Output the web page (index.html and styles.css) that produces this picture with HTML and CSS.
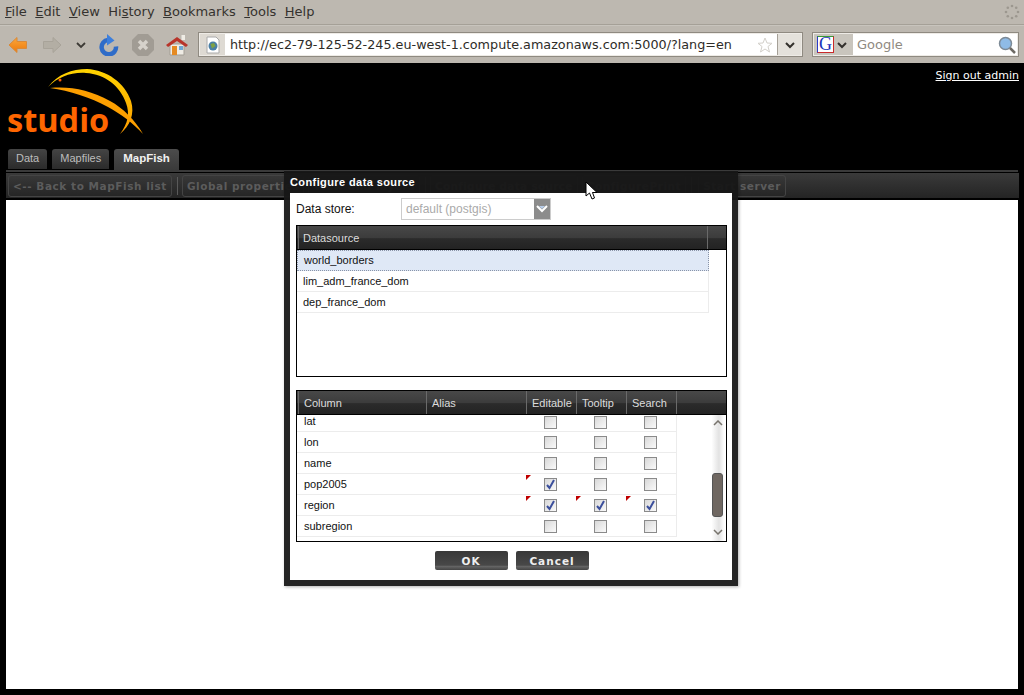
FILE: index.html
```html
<!DOCTYPE html>
<html lang="en">
<head>
    <meta charset="UTF-8">
    <title>Studio</title>
    <link rel="stylesheet" href="styles.css">
</head>
<body>
    <!-- browser chrome -->
    <div class="menubar">
        <span><u>F</u>ile</span>
        <span><u>E</u>dit</span>
        <span><u>V</u>iew</span>
        <span>Hi<u>s</u>tory</span>
        <span><u>B</u>ookmarks</span>
        <span><u>T</u>ools</span>
        <span><u>H</u>elp</span>
        <svg class="throbber" width="16" height="16" viewBox="0 0 16 16">
            <g fill="#9c978f">
                <circle cx="8" cy="2" r="1.3"/><circle cx="12.2" cy="3.8" r="1.3"/><circle cx="14" cy="8" r="1.3"/><circle cx="12.2" cy="12.2" r="1.3"/>
                <circle cx="8" cy="14" r="1.3"/><circle cx="3.8" cy="12.2" r="1.3"/><circle cx="2" cy="8" r="1.3"/><circle cx="3.8" cy="3.8" r="1.3"/>
            </g>
        </svg>
    </div>
    <div class="navbar">
        <svg class="nav-icon back" width="20" height="18" viewBox="0 0 20 18">
            <defs><linearGradient id="orange" x1="0" y1="0" x2="0" y2="1"><stop offset="0" stop-color="#fba63a"/><stop offset="1" stop-color="#ec7a0c"/></linearGradient></defs>
            <path d="M1 9 L9 1.500 V5.500 H18.500 V12.500 H9 V16.500 Z" fill="url(#orange)" stroke="#d98a3a"/>
        </svg>
        <svg class="nav-icon forward" width="20" height="18" viewBox="0 0 20 18"><path d="M19 9 L11 1.500 V5.500 H1.500 V12.500 H11 V16.500 Z" fill="#b3aea4" stroke="#a8a399"/></svg>
        <svg class="nav-icon drop" width="12" height="8" viewBox="0 0 12 8"><path d="M2 2 L6 6 L10 2" fill="none" stroke="#3d3a35" stroke-width="1.800"/></svg>
        <svg class="nav-icon reload" width="20" height="22" viewBox="0 0 20 22">
            <path d="M17 12.500 A7.200 7.200 0 1 1 9 6" fill="none" stroke="#2f6cc8" stroke-width="4.500"/>
            <path d="M8 0 L15.500 6.500 L8 11.500 Z" fill="#3d7fdc"/>
        </svg>
        <svg class="nav-icon stop" width="24" height="24" viewBox="0 0 24 24"><path d="M7 1 H17 L23 7 V17 L17 23 H7 L1 17 V7 Z" fill="#a19c94"/><path d="M8 8 L16 16 M16 8 L8 16" stroke="#d6d2cb" stroke-width="3.500"/></svg>
        <svg class="nav-icon home" width="22" height="22" viewBox="0 0 22 22"><path d="M4 10 H18 V21 H4 Z" fill="#efece5" stroke="#a39e95"/><path d="M0 11 L11 3 L22 11 L20 13 L11 7 L2 13 Z" fill="#b8342a"/><rect x="15.500" y="1" width="3.500" height="5" fill="#efece5"/><rect x="6" y="12" width="5" height="9" fill="#e58a22"/><rect x="13" y="12" width="4" height="4" fill="#6fa8d4"/></svg>
        <div class="urlbar">
            <span class="favicon"><svg width="16" height="18" viewBox="0 0 16 18"><path d="M2 1 H11 L14 4 V17 H2 Z" fill="#fff" stroke="#aaa"/><circle cx="8" cy="10" r="4.500" fill="#4a7fa5"/><path d="M5.500 8 L9 7 L10.500 10 L7 12.500 Z" fill="#7fa243"/></svg></span>
            <span class="url">http://ec2-79-125-52-245.eu-west-1.compute.amazonaws.com:5000/?lang=en</span>
            <svg class="star" width="16" height="16" viewBox="0 0 16 16"><path d="M8 1 L10 6 L15 6.300 L11 9.500 L12.500 15 L8 12 L3.500 15 L5 9.500 L1 6.300 L6 6 Z" fill="#fff" stroke="#d3d0ca"/></svg>
            <span class="url-drop"><svg width="12" height="8" viewBox="0 0 12 8"><path d="M2 2 L6 6 L10 2" fill="none" stroke="#33302c" stroke-width="2"/></svg></span>
        </div>
        <div class="searchbar">
            <span class="engine">
                <span class="engine-logo">G</span>
                <svg width="12" height="8" viewBox="0 0 12 8"><path d="M2 2 L6 6 L10 2" fill="none" stroke="#33302c" stroke-width="2"/></svg>
            </span>
            <span class="search-hint">Google</span>
            <svg class="lens" width="18" height="18" viewBox="0 0 18 18"><circle cx="7.500" cy="7.500" r="6" fill="#8fbbe6" stroke="#7d8a96" stroke-width="1.500"/><path d="M12 12 L17 17" stroke="#6d6a64" stroke-width="2.500"/></svg>
        </div>
    </div>

    <!-- page -->
    <div class="page">
        <div class="header">
            <div class="logo">
                <svg class="logo-mark" width="100" height="68" viewBox="0 0 100 68">
                    <defs><linearGradient id="arc" x1="0" y1="0" x2="0" y2="1"><stop offset="0" stop-color="#ffd400"/><stop offset="1" stop-color="#fd9a00"/></linearGradient></defs>
                    <path d="M3 19 C13 6 27 1 42 1 C62 2 80 15 86 33 C90 46 85 58 75 66 C83 55 85 46 81 35 C75 18 60 6 41 5 C26 4 13 9 3 19 Z" fill="url(#arc)"/>
                    <path d="M5 20 C25 18 45 22 65 33 C78 40 90 52 98 66 C88 55 76 46 63 39 C45 29 25 23 5 20 Z" fill="#fd9f00"/>
                    <circle cx="15" cy="12" r="1.500" fill="#ff5a00"/>
                </svg>
                <span class="logo-text">studio</span>
            </div>
            <a class="signout">Sign out admin</a>
        </div>
        <div class="tabs">
            <span class="tab">Data</span>
            <span class="tab">Mapfiles</span>
            <span class="tab active">MapFish</span>
        </div>
        <div class="toolbar">
            <span class="tbtn">&lt;-- Back to MapFish list</span>
            <i class="sep"></i>
            <span class="tbtn">Global properties</span>
            <span class="tbtn">View and layers</span>
            <i class="sep"></i>
            <span class="tbtn narrow">Configure data source</span>
            <span class="tbtn">ConfigurePrint</span>
            <i class="sep"></i>
            <span class="tbtn start">Start server</span>
        </div>
        <div class="content"></div>
    </div>

    <!-- modal window -->
    <div class="modal">
        <div class="modal-title">Configure data source</div>
        <div class="modal-body">
            <div class="store-row">
                <label>Data store:</label>
                <div class="combo">
                    <span class="combo-text">default (postgis)</span>
                    <span class="combo-btn"><svg width="14" height="10" viewBox="0 0 14 10"><path d="M2 2 L7 7 L12 2" fill="none" stroke="#fff" stroke-width="2"/><path d="M4 2 H10 L7 5 Z" fill="#b8cdea"/></svg></span>
                </div>
            </div>

            <div class="grid ds-grid">
                <div class="grid-head">
                    <span class="hcell ds-col">Datasource</span>
                    <span class="hcell"></span>
                </div>
                <div class="ds-row selected">world_borders</div>
                <div class="ds-row">lim_adm_france_dom</div>
                <div class="ds-row">dep_france_dom</div>
            </div>

            <div class="grid col-grid">
                <div class="grid-head">
                    <span class="hcell c-name">Column</span>
                    <span class="hcell c-alias">Alias</span>
                    <span class="hcell c-flag">Editable</span>
                    <span class="hcell c-flag">Tooltip</span>
                    <span class="hcell c-flag">Search</span>
                    <span class="hcell"></span>
                </div>
                <div class="col-body">
                    <div class="col-rows">
                        <div class="row cut">
                            <span class="c-name">lat</span><span class="c-alias"></span>
                            <span class="c-flag"><i class="cb"></i></span><span class="c-flag"><i class="cb"></i></span><span class="c-flag"><i class="cb"></i></span>
                        </div>
                        <div class="row">
                            <span class="c-name">lon</span><span class="c-alias"></span>
                            <span class="c-flag"><i class="cb"></i></span><span class="c-flag"><i class="cb"></i></span><span class="c-flag"><i class="cb"></i></span>
                        </div>
                        <div class="row">
                            <span class="c-name">name</span><span class="c-alias"></span>
                            <span class="c-flag"><i class="cb"></i></span><span class="c-flag"><i class="cb"></i></span><span class="c-flag"><i class="cb"></i></span>
                        </div>
                        <div class="row">
                            <span class="c-name">pop2005</span><span class="c-alias"></span>
                            <span class="c-flag dirty"><i class="cb"><svg width="11" height="11" viewBox="0 0 11 11"><path d="M2 6 L4.500 9 L9 1" fill="none" stroke="#3b4f9c" stroke-width="2"/></svg></i></span><span class="c-flag"><i class="cb"></i></span><span class="c-flag"><i class="cb"></i></span>
                        </div>
                        <div class="row">
                            <span class="c-name">region</span><span class="c-alias"></span>
                            <span class="c-flag dirty"><i class="cb"><svg width="11" height="11" viewBox="0 0 11 11"><path d="M2 6 L4.500 9 L9 1" fill="none" stroke="#3b4f9c" stroke-width="2"/></svg></i></span><span class="c-flag dirty"><i class="cb"><svg width="11" height="11" viewBox="0 0 11 11"><path d="M2 6 L4.500 9 L9 1" fill="none" stroke="#3b4f9c" stroke-width="2"/></svg></i></span><span class="c-flag dirty"><i class="cb"><svg width="11" height="11" viewBox="0 0 11 11"><path d="M2 6 L4.500 9 L9 1" fill="none" stroke="#3b4f9c" stroke-width="2"/></svg></i></span>
                        </div>
                        <div class="row">
                            <span class="c-name">subregion</span><span class="c-alias"></span>
                            <span class="c-flag"><i class="cb"></i></span><span class="c-flag"><i class="cb"></i></span><span class="c-flag"><i class="cb"></i></span>
                        </div>
                    </div>
                    <div class="scrollbar">
                        <svg width="10" height="6" viewBox="0 0 10 6"><path d="M1 5 L5 1 L9 5" fill="none" stroke="#77736c" stroke-width="1.500"/></svg>
                        <div class="thumb"></div>
                        <svg width="10" height="6" viewBox="0 0 10 6"><path d="M1 1 L5 5 L9 1" fill="none" stroke="#77736c" stroke-width="1.500"/></svg>
                    </div>
                </div>
            </div>

            <div class="modal-btns">
                <span class="btn">OK</span>
                <span class="btn">Cancel</span>
            </div>
        </div>
    </div>

    <svg class="cursor" width="14" height="20" viewBox="0 0 14 20"><path d="M1 1 V15 L4.500 12 L7 18 L9.500 17 L7.500 11.500 H12 Z" fill="#fff" stroke="#000"/></svg>
</body>
</html>
```

FILE: styles.css
```css
html, body {
    margin: 0;
    padding: 0;
    height: 695px;
    overflow: hidden;
}
body {
    font-family: "DejaVu Sans", sans-serif;
    background-color: #000;
    display: flex;
    flex-direction: column;
    position: relative;
}

/* browser chrome */
.menubar {
    height: 25px;
    box-sizing: border-box;
    background-color: #bdb8b0;
    border-bottom: 1px solid #a5a097;
    color: #35322e;
    font-size: 13px;
    display: flex;
    align-items: center;
    gap: 8.500px;
    padding: 0 5px 1px 5px;
}
.throbber {
    margin-left: auto;
    margin-right: -1px;
}
.navbar {
    height: 38px;
    box-sizing: border-box;
    background-color: #bdb8b0;
    border-top: 1px solid #c8c4bd;
    display: flex;
    align-items: center;
    padding: 0 5px 0 8px;
}
.nav-icon {
    flex: none;
}
.forward { margin-left: 14px; }
.drop { margin-left: 13px; }
.reload { margin-left: 12px; }
.stop { margin-left: 12px; }
.home { margin-left: 11px; }
.urlbar {
    margin-left: 10px;
    width: 605px;
    height: 25px;
    box-sizing: border-box;
    background-color: #fff;
    border: 2px solid #eeebe6;
    outline: 1px solid #8f8a81;
    outline-offset: -1px;
    display: flex;
    align-items: center;
    flex: none;
}
.favicon {
    width: 25px;
    height: 21px;
    background-color: #dedad3;
    display: flex;
    align-items: center;
    justify-content: center;
    flex: none;
}
.url {
    margin-left: 5px;
    font-size: 12.750px;
    color: #2e2c28;
    white-space: nowrap;
    flex: 1;
}
.star {
    margin-right: 4px;
    flex: none;
}
.url-drop {
    width: 23px;
    height: 21px;
    background-color: #e4e1db;
    border-left: 1px solid #a5a097;
    display: flex;
    align-items: center;
    justify-content: center;
    flex: none;
}
.searchbar {
    margin-left: 9px;
    width: 207px;
    height: 25px;
    box-sizing: border-box;
    background-color: #fff;
    border: 2px solid #eeebe6;
    outline: 1px solid #8f8a81;
    outline-offset: -1px;
    display: flex;
    align-items: center;
    flex: none;
}
.engine {
    width: 39px;
    height: 21px;
    background-color: #c9c5bd;
    display: flex;
    align-items: center;
    gap: 2px;
    padding-left: 3px;
    box-sizing: border-box;
    flex: none;
}
.engine-logo {
    width: 17px;
    height: 17px;
    box-sizing: border-box;
    background-color: #fff;
    border: 1px solid;
    border-color: #3a9a35 #c92a2a #c92a2a #2a3ac9;
    color: #1a35b8;
    font-family: "Liberation Serif", serif;
    font-size: 18px;
    line-height: 15px;
    text-align: center;
}
.search-hint {
    margin-left: 4px;
    color: #8f8a81;
    font-size: 13px;
    flex: 1;
}
.lens {
    margin-right: 1px;
}

/* page */
.page {
    flex: 1;
    display: flex;
    flex-direction: column;
    min-height: 0;
    padding: 0 6px 6px 6px;
}
.header {
    height: 86px;
    flex: none;
    display: flex;
    justify-content: space-between;
    padding-left: 1px;
    margin-right: -1px;
}
.logo {
    position: relative;
    width: 140px;
}
.logo-mark {
    position: absolute;
    left: 38px;
    top: 5px;
}
.logo-text {
    position: absolute;
    left: 0;
    top: 34px;
    color: #ff6600;
    font-family: "Open Sans", sans-serif;
    font-weight: 700;
    font-size: 32.500px;
}
.signout {
    color: #fff;
    font-size: 11px;
    text-decoration: underline;
    margin-top: 6px;
}
.tabs {
    height: 23px;
    flex: none;
    box-sizing: border-box;
    border-bottom: 2px solid #3a3a3a;
    display: flex;
    gap: 5px;
    padding-left: 2px;
    align-items: flex-end;
}
.tab {
    height: 20px;
    line-height: 18px;
    margin-bottom: 1px;
    padding: 0 8px;
    border-radius: 3px 3px 0 0;
    background: linear-gradient(#444, #2b2b2b);
    color: #bdbdbd;
    font-family: "Liberation Sans", sans-serif;
    font-size: 11px;
}
.tab.active {
    height: 21px;
    line-height: 19px;
    margin-bottom: 0;
    padding: 0 9px;
    background: linear-gradient(#4c4c4c, #3a3a3a);
    color: #f0f0f0;
    font-size: 11.500px;
    font-weight: bold;
}
.toolbar {
    height: 25px;
    flex: none;
    box-sizing: border-box;
    margin: 1px -1px 2px 0;
    background: linear-gradient(#3a3a3a, #242424);
    display: flex;
    align-items: center;
    gap: 4px;
    padding-left: 2px;
    white-space: nowrap;
    overflow: hidden;
}
.tbtn {
    height: 20px;
    line-height: 20px;
    padding: 0 4px;
    border: 1px solid #444;
    border-radius: 3px;
    color: #5c5c5c;
    font-size: 10.500px;
    font-weight: bold;
    letter-spacing: 0.550px;
}
.tbtn.narrow {
    letter-spacing: 0.300px;
}
.tbtn.start {
    margin-left: 2px;
}
.sep {
    width: 1px;
    height: 18px;
    background-color: #5a5a5a;
    margin-left: 1px;
}
.content {
    flex: 1;
    background-color: #fff;
}

/* modal */
.modal {
    position: absolute;
    left: 284px;
    top: 170px;
    width: 454px;
    height: 416px;
    box-sizing: border-box;
    background-color: rgba(22, 22, 22, 0.94);
    border-top: 1px solid #3a3a3a;
    box-shadow: 1px 1px 3px rgba(0, 0, 0, 0.3);
    padding: 0 6px 6px 6px;
    display: flex;
    flex-direction: column;
}
.modal-title {
    height: 22px;
    line-height: 23px;
    color: #fff;
    font-family: "Liberation Sans", sans-serif;
    font-size: 11px;
    font-weight: bold;
    letter-spacing: 0.400px;
}
.modal-body {
    flex: 1;
    min-height: 0;
    background-color: #fff;
    padding: 0 5px 0 6px;
    font-family: "Liberation Sans", sans-serif;
    font-size: 11px;
    color: #111;
}
.store-row {
    height: 32px;
    display: flex;
    align-items: center;
}
.store-row label {
    width: 105px;
    font-size: 12px;
}
.combo {
    width: 150px;
    height: 22px;
    box-sizing: border-box;
    border: 1px solid #ccc;
    display: flex;
    color: #aaa;
    font-size: 12px;
}
.combo-text {
    flex: 1;
    line-height: 20px;
    padding-left: 4px;
}
.combo-btn {
    width: 16px;
    background-color: #8c8c8c;
    display: flex;
    align-items: center;
    justify-content: center;
}
.grid {
    border: 1px solid #000;
    box-sizing: border-box;
    width: 431px;
}
.ds-grid {
    height: 152px;
}
.col-grid {
    margin-top: 13px;
    height: 152px;
}
.grid-head {
    height: 24px;
    box-sizing: border-box;
    border-bottom: 1px solid #000;
    background: linear-gradient(#484848 0, #3c3c3c 50%, #2b2b2b 55%, #232323 100%);
    color: #dcdcdc;
    display: flex;
    padding-left: 1px;
}
.hcell {
    border-left: 1px solid #6a6a6a;
    line-height: 24px;
    padding-left: 5px;
    box-sizing: border-box;
}
.ds-col {
    width: 409px;
    padding-left: 4px;
}
.ds-row {
    width: 412px;
    height: 21px;
    line-height: 20px;
    box-sizing: border-box;
    padding-left: 6px;
    border-bottom: 1px solid #ececec;
    border-right: 1px solid #ececec;
}
.ds-row.selected {
    background-color: #dfe8f6;
    border: 1px dotted #8a94a8;
    line-height: 18px;
}
.col-body {
    display: flex;
    height: 126px;
    overflow: hidden;
}
.col-rows {
    width: 380px;
    flex: none;
}
.c-name {
    width: 128px;
    flex: none;
    box-sizing: border-box;
}
.c-alias {
    width: 100px;
    flex: none;
    box-sizing: border-box;
}
.c-flag {
    width: 50px;
    flex: none;
    box-sizing: border-box;
}
.row {
    height: 21px;
    box-sizing: border-box;
    border-bottom: 1px solid #ececec;
    border-right: 1px solid #ececec;
    display: flex;
    align-items: center;
    padding-left: 6px;
}
.row .c-name {
    width: 122px;
    padding-left: 1px;
}
.row.cut {
    height: 17px;
    align-items: flex-end;
    padding-bottom: 4px;
}
.row .c-flag {
    position: relative;
    display: flex;
    justify-content: center;
}
.row .c-flag.dirty::before {
    content: "";
    position: absolute;
    left: 1px;
    top: -3px;
    border-top: 5px solid #c00000;
    border-right: 5px solid transparent;
}
.cb {
    width: 13px;
    height: 13px;
    box-sizing: border-box;
    border: 1px solid #8a8a8a;
    background: linear-gradient(135deg, #d8d8d8, #fafafa);
    display: flex;
    align-items: center;
    justify-content: center;
}
.cut .cb {
    margin-bottom: -2px;
}
.scrollbar {
    width: 15px;
    margin-left: auto;
    margin-right: 1px;
    display: flex;
    flex-direction: column;
    align-items: center;
    padding: 5px 0 4px 0;
    box-sizing: border-box;
    background: linear-gradient(90deg, #fff 10%, #e2e2e2 60%, #fff 95%);
}
.thumb {
    width: 11px;
    height: 44px;
    margin-top: 47px;
    margin-bottom: 12px;
    box-sizing: border-box;
    border: 1px solid #555;
    border-radius: 3px;
    background-color: #6f6761;
}
.modal-btns {
    display: flex;
    justify-content: center;
    gap: 8px;
    margin-top: 9px;
}
.btn {
    width: 73px;
    height: 19px;
    line-height: 20px;
    text-align: center;
    border-radius: 2px;
    background: linear-gradient(#383838 0, #484848 75%, #666 80%, #444 100%);
    color: #eee;
    font-family: "DejaVu Sans", sans-serif;
    font-size: 10.500px;
    font-weight: bold;
    letter-spacing: 1px;
}
.cursor {
    position: absolute;
    left: 585px;
    top: 181px;
}
```
